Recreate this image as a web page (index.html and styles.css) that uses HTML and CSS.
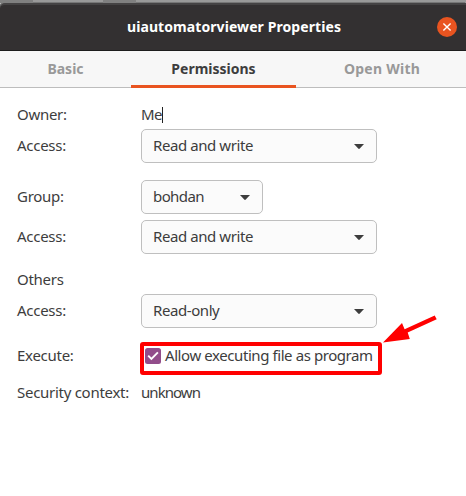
FILE: index.html
```html
<!DOCTYPE html>
<html lang="en">
<head>
<meta charset="utf-8">
<title>uiautomatorviewer Properties</title>
<link rel="stylesheet" href="styles.css">
</head>
<body>
<div class="backdrop"><i class="shade shade-a"></i><i class="shade shade-b"></i></div>
<header class="titlebar">
  <h1 class="title">uiautomatorviewer Properties</h1>
  <button class="close" aria-label="Close"><svg width="20" height="20" viewBox="0 0 20 20"><path d="M6.4 6.4l7.2 7.2M13.6 6.4l-7.2 7.2" stroke="#fff" stroke-width="1.4" fill="none"/></svg></button>
</header>
<nav class="tabs">
  <span class="tab">Basic</span>
  <span class="tab active">Permissions</span>
  <span class="tab tab-open">Open With</span>
</nav>
<main class="form">
  <div class="row text-row"><span class="label">Owner:</span><span class="value me">Me</span><i class="caret"></i></div>
  <div class="row"><span class="label">Access:</span><div class="combo"><span>Read and write</span><svg class="arrow" width="10" height="5" viewBox="0 0 10 5"><path d="M0 0h10L5.8 4.6Q5 5.2 4.2 4.6Z"/></svg></div></div>
  <div class="row section"><span class="label">Group:</span><div class="combo small"><span class="bohdan">bohdan</span><svg class="arrow" width="10" height="5" viewBox="0 0 10 5"><path d="M0 0h10L5.8 4.6Q5 5.2 4.2 4.6Z"/></svg></div></div>
  <div class="row next"><span class="label">Access:</span><div class="combo"><span>Read and write</span><svg class="arrow" width="10" height="5" viewBox="0 0 10 5"><path d="M0 0h10L5.8 4.6Q5 5.2 4.2 4.6Z"/></svg></div></div>
  <div class="row text-row others-row"><span class="label">Others</span></div>
  <div class="row"><span class="label">Access:</span><div class="combo"><span>Read-only</span><svg class="arrow" width="10" height="5" viewBox="0 0 10 5"><path d="M0 0h10L5.8 4.6Q5 5.2 4.2 4.6Z"/></svg></div></div>
  <div class="row execute-row"><span class="label">Execute:</span>
    <div class="check"><svg width="16" height="16" viewBox="0 0 16 16"><rect width="16" height="16" rx="2.5" fill="#924d8b"/><path d="M3.2 7.6l3.2 3.2 6.5-6.5" fill="none" stroke="#fff" stroke-width="1.9"/></svg><span>Allow executing file as program</span><i class="highlight"></i></div>
  </div>
  <div class="row text-row security-row"><span class="label">Security context:</span><span class="value unknown">unknown</span></div>
</main>
<svg class="pointer" width="56" height="30" viewBox="0 0 56 30"><path d="M1 27.5L20 8l2.6 6.3L52.7 .5l2 3.7-29 13.3L27.8 24Z" fill="#f00"/></svg>
</body>
</html>
```
FILE: styles.css
```css
* { box-sizing: border-box; }
body { margin: 0; width: 466px; height: 496px; overflow: hidden; background: #fff; color: #3d3d3d; font: 15px/20px "Noto Sans", sans-serif; position: relative; }
span, h1 { white-space: nowrap; }
.backdrop { height: 3px; background: #999; display: flex; }
.shade { height: 3px; width: 33px; background: #808080; }
.shade-b { margin-left: 70px; }
.titlebar { height: 48px; background: #333031; border-top: 2px solid #454344; border-bottom: 1px solid #1d1d1d; border-radius: 5px 0 0 0; display: grid; grid-template-columns: 127px 1fr 29px; align-items: center; box-shadow: -1px -1px 0 #777; }
.title { grid-column: 2; margin: 0; padding-bottom: 2px; color: #fff; font-size: 14px; line-height: 20px; font-weight: 700; letter-spacing: .08px; }
.close { width: 20px; height: 20px; margin-bottom: 1px; padding: 0; border: 0; border-radius: 50%; background: #e95420; }
.close svg { display: block; }
.tabs { height: 37px; background: #f7f7f7; border-bottom: 1px solid #bdbdbd; display: grid; grid-template-columns: 131px 165px 170px; font-size: 14px; font-weight: 700; color: #999; text-align: center; line-height: 36px; }
.tab { height: 37px; }
.active { color: #3d3d3d; border-bottom: 3px solid #e95420; }
.tab-open { letter-spacing: .25px; padding-left: 2px; }
.form { padding: 14px 17px 0; letter-spacing: -.42px; }
.form span { padding-bottom: 2px; }
.row { display: flex; align-items: center; height: 34px; }
.label { width: 124px; letter-spacing: -.28px; }
.text-row { height: 27px; padding-bottom: 1px; }
.section { margin-top: 17px; }
.next { margin-top: 6px; }
.me { letter-spacing: -.5px; }
.caret { width: 1px; height: 16px; background: #222; }
.combo { width: 236px; height: 34px; padding: 0 12px 0 11px; border: 1px solid #bfbfbf; border-radius: 5px; background: #fbfbfb; display: flex; align-items: center; justify-content: space-between; }
.small { width: 122px; }
.bohdan { letter-spacing: -.6px; }
.unknown { letter-spacing: -.95px; }
.arrow { fill: #3d3d3d; }
.others-row { margin-top: 13px; }
.execute-row { margin-top: 11px; }
.check { display: flex; align-items: center; position: relative; padding-left: 4px; gap: 4px; }
.highlight { position: absolute; left: -1px; top: -3px; width: 242px; height: 33px; border: 4px solid #f00; border-radius: 3px; }
.security-row { margin-top: 7px; }
.pointer { position: absolute; left: 382px; top: 315px; }
```
